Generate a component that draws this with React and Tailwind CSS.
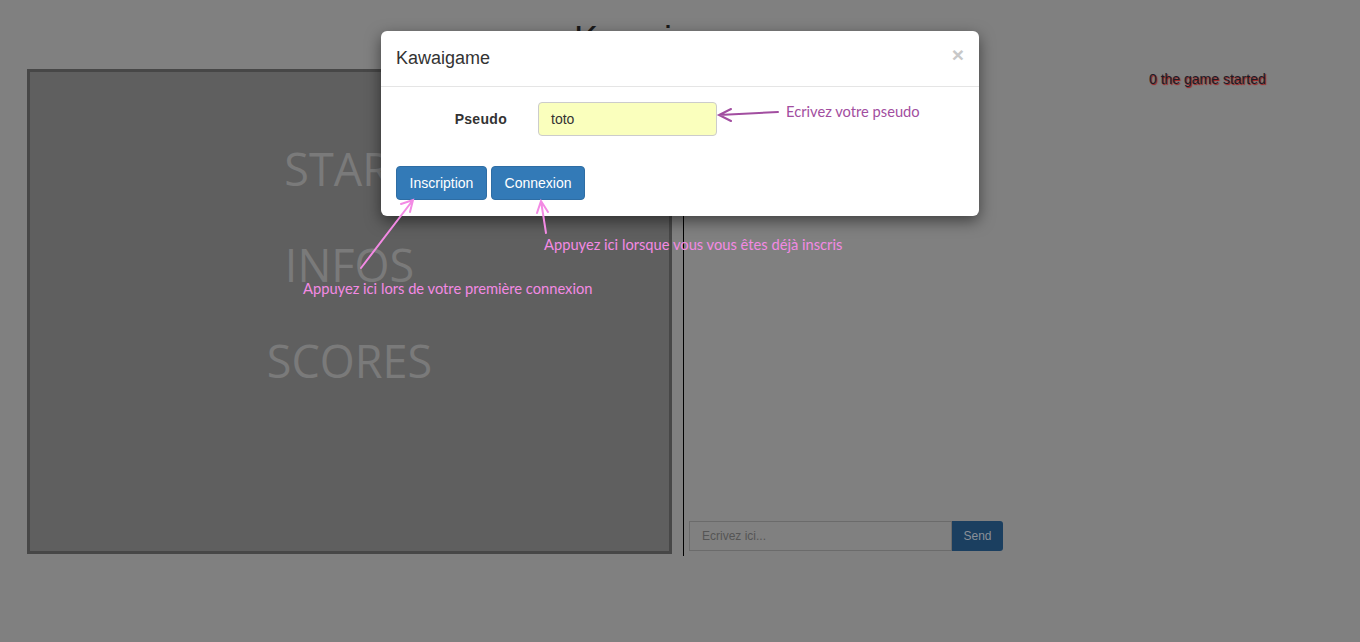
export default function App() {
  const arrow = "#f38ae4";
  return (
    <div className="relative w-[1360px] h-[642px] overflow-hidden bg-[#808080] font-['Liberation_Sans',Arial,sans-serif]">
      <h1 className="pt-[20px] pr-[24px] text-center text-[36px] leading-[40px] font-normal text-[#1a1a1a]">
        Kawaigame
      </h1>
      <div className="mt-[9px] flex pl-[27px]">
        <div className="flex h-[485px] w-[645px] flex-col items-center border-[3px] border-[#474747] bg-[#5f5f5f] pt-[49px] font-['Open_Sans',sans-serif] text-[45px] leading-[96px] text-[#7a7a7a]">
          <div>START</div>
          <div>INFOS</div>
          <div>SCORES</div>
        </div>
        <div className="ml-[11px] flex h-[487px] w-[330px] flex-col justify-end border-l border-black pb-[5px] pl-[5px]">
          <div className="flex">
            <div className="flex h-[30px] w-[263px] items-center border border-[#6b6b6b] pl-[12px] text-[12px] text-[#555]">
              Ecrivez ici...
            </div>
            <div className="flex h-[30px] w-[51px] items-center justify-center rounded-r-[3px] bg-[#1b3f60] text-[12px] text-[#8a9098]">
              Send
            </div>
          </div>
        </div>
        <div className="pl-[136px] pt-0 text-[14px] text-[#1c1c26] [text-shadow:1px_1px_1px_#a31515]">
          0 the game started
        </div>
      </div>

      {/* Modal */}
      <div className="absolute left-[381px] top-[31px] w-[598px] rounded-[6px] bg-white shadow-[0_5px_15px_rgba(0,0,0,0.5)]">
        <div className="flex h-[56px] items-center justify-between border-b border-[#e5e5e5] px-[15px]">
          <div className="text-[18px] text-[#333]">Kawaigame</div>
          <div className="mt-[-8px] text-[21px] font-bold leading-none text-[#c8c8c8]">×</div>
        </div>
        <div className="px-[15px] pt-[15px] pb-[16px]">
          <div className="flex items-center">
            <div className="w-[111px] text-right text-[14px] font-bold tracking-[0.3px] text-[#333]">Pseudo</div>
            <div className="ml-[31px] flex h-[34px] w-[179px] items-center rounded-[4px] border border-[#ccc] bg-[#faffbd] pl-[12px] text-[14px] text-[#333]">
              toto
            </div>
          </div>
          <div className="mt-[30px] flex gap-[4px]">
            <div className="flex h-[34px] w-[91px] items-center justify-center rounded-[4px] border border-[#2e6da4] bg-[#337ab7] text-[14px] text-white">
              Inscription
            </div>
            <div className="flex h-[34px] w-[94px] items-center justify-center rounded-[4px] border border-[#2e6da4] bg-[#337ab7] text-[14px] text-white">
              Connexion
            </div>
          </div>
        </div>
      </div>

      {/* Annotations */}
      <svg className="absolute left-0 top-0" width="1360" height="642" fill="none" strokeWidth="2" strokeLinecap="round">
        <path d="M778 112 L719 115 M731 109 L719 115 L731 121" stroke="#a24ea0" />
        <path d="M546 233 L541 201 M537 213 L541 201 L548 212" stroke={arrow} />
        <path d="M361 268 L413 200 M401 204 L413 200 L410 212" stroke={arrow} />
      </svg>
      <div className="absolute left-[786px] top-[101px] font-['Lato',sans-serif] text-[14.7px] leading-[20px] text-[#a24ea0]">
        Ecrivez votre pseudo
      </div>
      <div className="absolute left-[544px] top-[234px] font-['Lato',sans-serif] text-[14.7px] leading-[20px] text-[#f38ae4]">
        Appuyez ici lorsque vous vous êtes déjà inscris
      </div>
      <div className="absolute left-[303px] top-[278px] font-['Lato',sans-serif] text-[14.7px] leading-[20px] text-[#f38ae4]">
        Appuyez ici lors de votre première connexion
      </div>
    </div>
  );
}
